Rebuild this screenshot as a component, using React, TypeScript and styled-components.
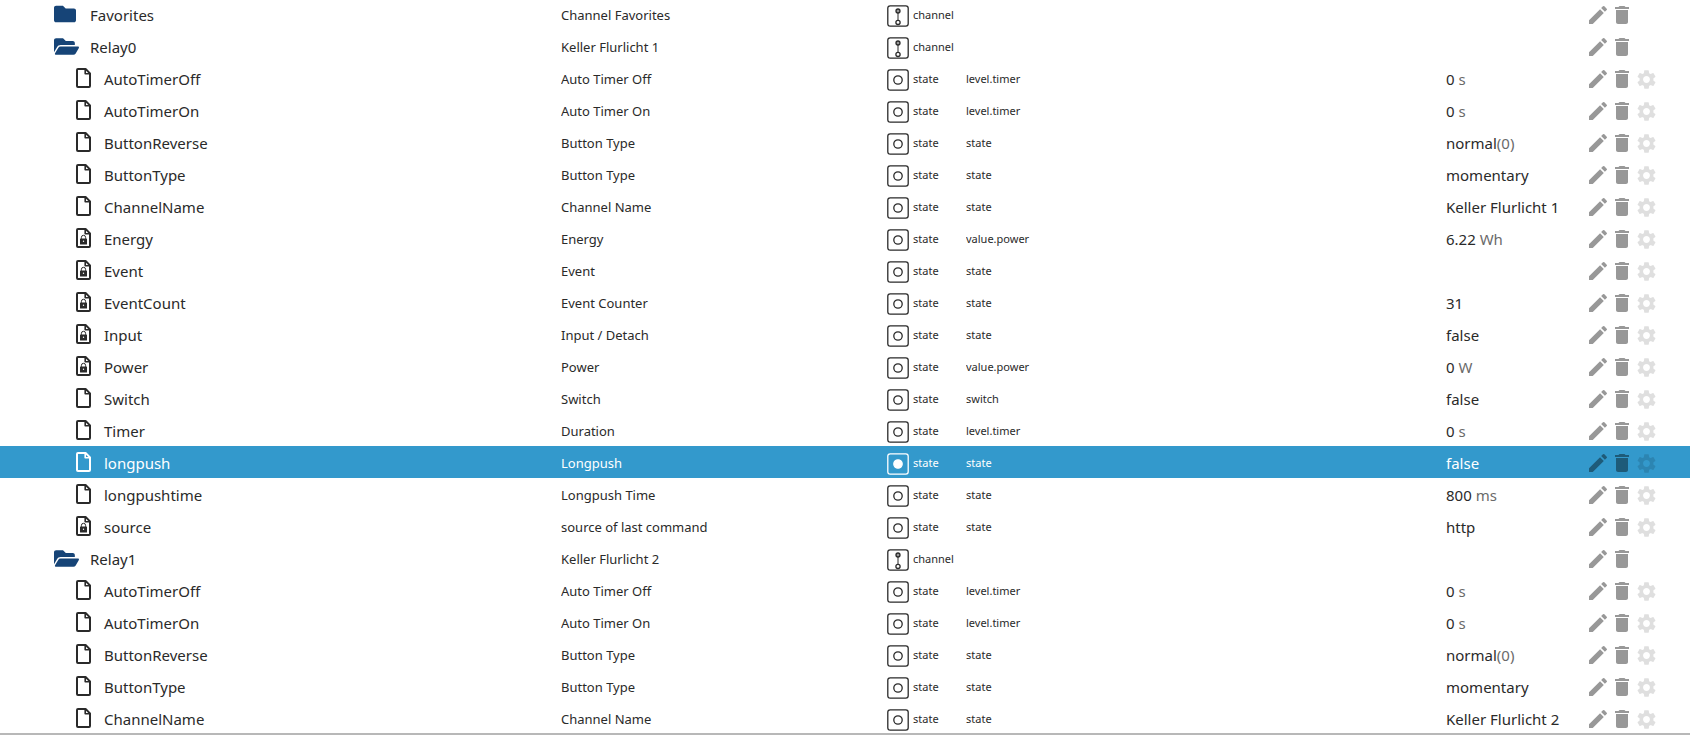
import React from 'react';
import styled, { createGlobalStyle, css } from 'styled-components';
import { MdDelete, MdEdit, MdSettings } from 'react-icons/md';
import { FaFolder, FaFolderOpen } from 'react-icons/fa';

type Kind = 'folder' | 'open' | 'file' | 'locked';

interface Entry {
  kind: Kind;
  name: string;
  title: string;
  role?: string;
  value?: string;
  unit?: string;
  selected?: boolean;
}

const entries: Entry[] = [
  { kind: 'folder', name: 'Favorites', title: 'Channel Favorites' },
  { kind: 'open', name: 'Relay0', title: 'Keller Flurlicht 1' },
  { kind: 'file', name: 'AutoTimerOff', title: 'Auto Timer Off', role: 'level.timer', value: '0', unit: ' s' },
  { kind: 'file', name: 'AutoTimerOn', title: 'Auto Timer On', role: 'level.timer', value: '0', unit: ' s' },
  { kind: 'file', name: 'ButtonReverse', title: 'Button Type', role: 'state', value: 'normal', unit: '(0)' },
  { kind: 'file', name: 'ButtonType', title: 'Button Type', role: 'state', value: 'momentary' },
  { kind: 'file', name: 'ChannelName', title: 'Channel Name', role: 'state', value: 'Keller Flurlicht 1' },
  { kind: 'locked', name: 'Energy', title: 'Energy', role: 'value.power', value: '6.22', unit: ' Wh' },
  { kind: 'locked', name: 'Event', title: 'Event', role: 'state' },
  { kind: 'locked', name: 'EventCount', title: 'Event Counter', role: 'state', value: '31' },
  { kind: 'locked', name: 'Input', title: 'Input / Detach', role: 'state', value: 'false' },
  { kind: 'locked', name: 'Power', title: 'Power', role: 'value.power', value: '0', unit: ' W' },
  { kind: 'file', name: 'Switch', title: 'Switch', role: 'switch', value: 'false' },
  { kind: 'file', name: 'Timer', title: 'Duration', role: 'level.timer', value: '0', unit: ' s' },
  { kind: 'file', name: 'longpush', title: 'Longpush', role: 'state', value: 'false', selected: true },
  { kind: 'file', name: 'longpushtime', title: 'Longpush Time', role: 'state', value: '800', unit: ' ms' },
  { kind: 'locked', name: 'source', title: 'source of last command', role: 'state', value: 'http' },
  { kind: 'open', name: 'Relay1', title: 'Keller Flurlicht 2' },
  { kind: 'file', name: 'AutoTimerOff', title: 'Auto Timer Off', role: 'level.timer', value: '0', unit: ' s' },
  { kind: 'file', name: 'AutoTimerOn', title: 'Auto Timer On', role: 'level.timer', value: '0', unit: ' s' },
  { kind: 'file', name: 'ButtonReverse', title: 'Button Type', role: 'state', value: 'normal', unit: '(0)' },
  { kind: 'file', name: 'ButtonType', title: 'Button Type', role: 'state', value: 'momentary' },
  { kind: 'file', name: 'ChannelName', title: 'Channel Name', role: 'state', value: 'Keller Flurlicht 2' },
];

const GlobalStyle = createGlobalStyle`
  *, *::before, *::after { box-sizing: border-box; }
  body {
    margin: 0;
    background: #fff;
    color: #2a2a2a;
    font-family: "Noto Sans", "Open Sans", sans-serif;
  }
`;

const Viewport = styled.main`
  height: 100vh;
  overflow: hidden;
  border-bottom: 2px solid #b8b8b8;
`;

const ObjectTable = styled.table`
  width: 100%;
  margin-top: -2px;
  table-layout: fixed;
  border-collapse: collapse;
`;

const Row = styled.tr<{ $selected?: boolean }>`
  height: 32px;
  ${({ $selected }) => $selected && css`
    background: #3399cc;
    color: #fff;
  `}
`;

const Cell = styled.td`
  height: 32px;
  padding: 2px 0 0;
  white-space: nowrap;
  overflow: hidden;
  line-height: 20px;
`;

const NameCell = styled(Cell)<{ $leaf: boolean }>`
  padding-left: ${({ $leaf }) => ($leaf ? 76 : 54)}px;
  font-size: 15px;
`;

const TitleCell = styled(Cell)`
  font-size: 13px;
`;

const SmallCell = styled(Cell)`
  font-size: 11px;
`;

const ValueCell = styled(Cell)`
  font-size: 15px;
`;

const Inline = styled.div<{ $gap: number }>`
  display: flex;
  align-items: center;
  gap: ${({ $gap }) => $gap}px;
`;

const IconSlot = styled.span<{ $folder: boolean }>`
  display: flex;
  flex: none;
  width: ${({ $folder }) => ($folder ? 25 : 15)}px;
  padding-bottom: 2px;
  ${({ $folder }) => $folder && css`
    color: #164477;
  `}
`;

const TypeSlot = styled.span`
  display: flex;
  padding-top: 2px;
`;

const Unit = styled.span`
  white-space: pre;
  opacity: 0.7;
`;

const Actions = styled.div`
  display: flex;
`;

const Action = styled.button`
  display: flex;
  align-items: center;
  justify-content: center;
  width: 24px;
  height: 24px;
  padding: 0;
  border: 0;
  background: none;
  color: #000;
  opacity: 0.4;
  cursor: pointer;

  &:disabled {
    opacity: 0.12;
    cursor: default;
  }
`;

function FileIcon({ locked }: { locked: boolean }) {
  return (
    <svg width="15" height="20" viewBox="0 0 15 20" fill="none" stroke="currentColor" strokeWidth="2" strokeLinejoin="round" aria-hidden="true">
      <path d="M2 1H9.6L14 5.4V18a1 1 0 0 1-1 1H2a1 1 0 0 1-1-1V2a1 1 0 0 1 1-1Z" />
      <path d="M9.2 1V5.8H14" strokeWidth="1.6" />
      {locked && (
        <>
          <rect x="4" y="10.5" width="7" height="6" rx="0.6" fill="currentColor" stroke="none" />
          <path d="M5.4 10.8V9.4a2.1 2.1 0 0 1 4.2 0v1.4" strokeWidth="1" />
          <circle cx="7.5" cy="13.2" r="0.7" fill="#fff" stroke="none" />
        </>
      )}
    </svg>
  );
}

function TypeIcon({ channel, filled }: { channel: boolean; filled?: boolean }) {
  return (
    <svg width="22" height="22" viewBox="0 0 22 22" fill="none" stroke="currentColor" strokeWidth="1.3" aria-hidden="true">
      <rect x="0.8" y="0.8" width="20.4" height="20.4" rx="2.4" />
      {channel ? (
        <>
          <circle cx="11" cy="6" r="2" fill="#999" />
          <path d="M11 8V15.5" strokeWidth="1" />
          <circle cx="11" cy="17.4" r="2.1" />
        </>
      ) : (
        <circle cx="11" cy="11" r="4.2" fill={filled ? 'currentColor' : 'none'} />
      )}
    </svg>
  );
}

function EntryIcon({ kind }: { kind: Kind }) {
  if (kind === 'folder') return <FaFolder size={22} />;
  if (kind === 'open') return <FaFolderOpen size={25} />;
  return <FileIcon locked={kind === 'locked'} />;
}

function ObjectRow({ entry }: { entry: Entry }) {
  const leaf = entry.kind === 'file' || entry.kind === 'locked';
  return (
    <Row $selected={entry.selected} aria-selected={!!entry.selected}>
      <NameCell $leaf={leaf}>
        <Inline $gap={leaf ? 13 : 11}>
          <IconSlot $folder={!leaf}><EntryIcon kind={entry.kind} /></IconSlot>
          <span>{entry.name}</span>
        </Inline>
      </NameCell>
      <TitleCell>{entry.title}</TitleCell>
      <SmallCell>
        <Inline $gap={4}>
          <TypeSlot><TypeIcon channel={!leaf} filled={entry.selected} /></TypeSlot>
          <span>{leaf ? 'state' : 'channel'}</span>
        </Inline>
      </SmallCell>
      <SmallCell>{entry.role}</SmallCell>
      <ValueCell>
        {entry.value}
        {entry.unit && <Unit>{entry.unit}</Unit>}
      </ValueCell>
      <Cell>
        <Actions>
          <Action aria-label={`Edit ${entry.name}`}><MdEdit size={24} /></Action>
          <Action aria-label={`Delete ${entry.name}`}><MdDelete size={24} /></Action>
          {leaf && <Action disabled aria-label={`Configure ${entry.name}`}><MdSettings size={23} /></Action>}
        </Actions>
      </Cell>
    </Row>
  );
}

export default function App() {
  return (
    <>
      <GlobalStyle />
      <Viewport>
        <ObjectTable>
          <colgroup>
            <col style={{ width: 561 }} />
            <col style={{ width: 326 }} />
            <col style={{ width: 79 }} />
            <col />
            <col style={{ width: 140 }} />
            <col style={{ width: 104 }} />
          </colgroup>
          <tbody>
            {entries.map((entry, index) => <ObjectRow key={index} entry={entry} />)}
          </tbody>
        </ObjectTable>
      </Viewport>
    </>
  );
}
